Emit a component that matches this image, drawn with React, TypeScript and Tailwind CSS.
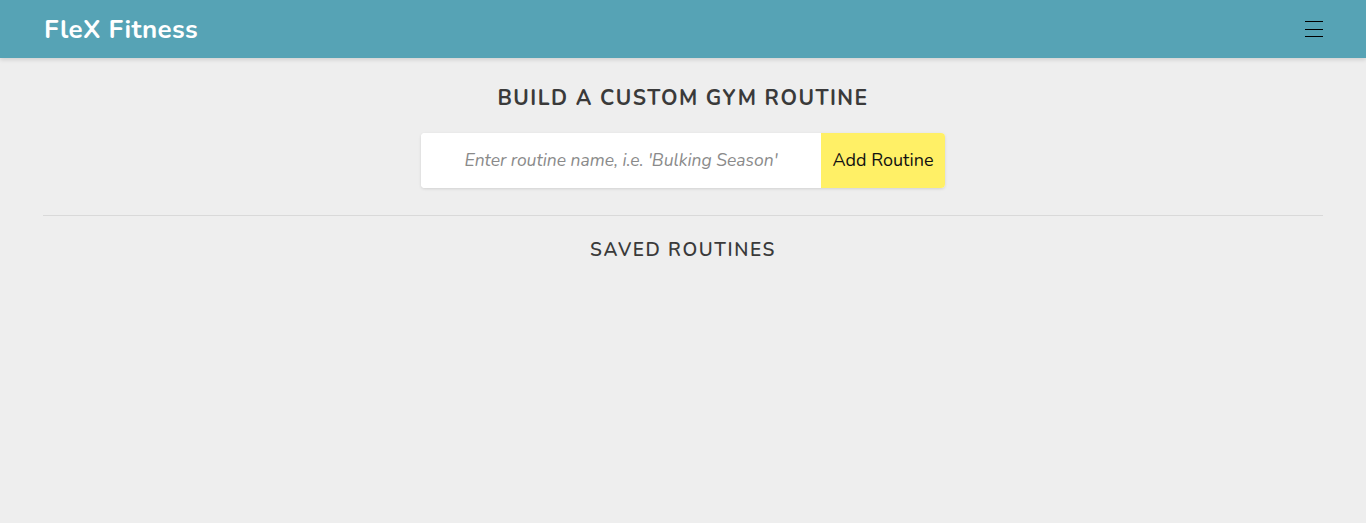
export default function App() {
  return (
    <div className="min-h-[523px] bg-[#eeeeee] font-['Nunito','Lato','Open_Sans',sans-serif] text-[#333]">
      <header className="flex h-[58px] items-center justify-between bg-[#56a3b5] pl-[44px] pr-[43px] shadow-[0_2px_4px_rgba(0,0,0,0.12)]">
        <span className="text-[26px] font-bold tracking-[0.4px] text-white">FleX Fitness</span>
        <button aria-label="Menu" className="flex h-[18px] w-[18px] flex-col justify-between py-[1px]">
          <span className="block h-[1px] w-full bg-black" />
          <span className="block h-[1px] w-full bg-black" />
          <span className="block h-[1px] w-full bg-black" />
        </button>
      </header>

      <main className="px-[43px]">
        <h1 className="mt-[25px] text-center text-[21px] font-bold tracking-[1.5px] text-[#3a3a3a]">
          BUILD A CUSTOM GYM ROUTINE
        </h1>

        <div className="mx-auto mt-[18px] flex h-[55px] w-[524px] overflow-hidden rounded-[4px] bg-white shadow-[0_1px_3px_rgba(0,0,0,0.12)]">
          <input
            className="w-[400px] bg-white text-center text-[17.5px] italic text-[#555] outline-none placeholder:text-[#8a8a8a]"
            placeholder="Enter routine name, i.e. 'Bulking Season'"
          />
          <button className="w-[124px] bg-[#fff066] text-[18px] text-[#111]">Add Routine</button>
        </div>

        <hr className="mt-[27px] border-t border-[#d9d9d9]" />

        <h2 className="mt-[20px] text-center text-[19px] font-semibold tracking-[1.6px] text-[#3a3a3a]">
          SAVED ROUTINES
        </h2>
      </main>
    </div>
  );
}
